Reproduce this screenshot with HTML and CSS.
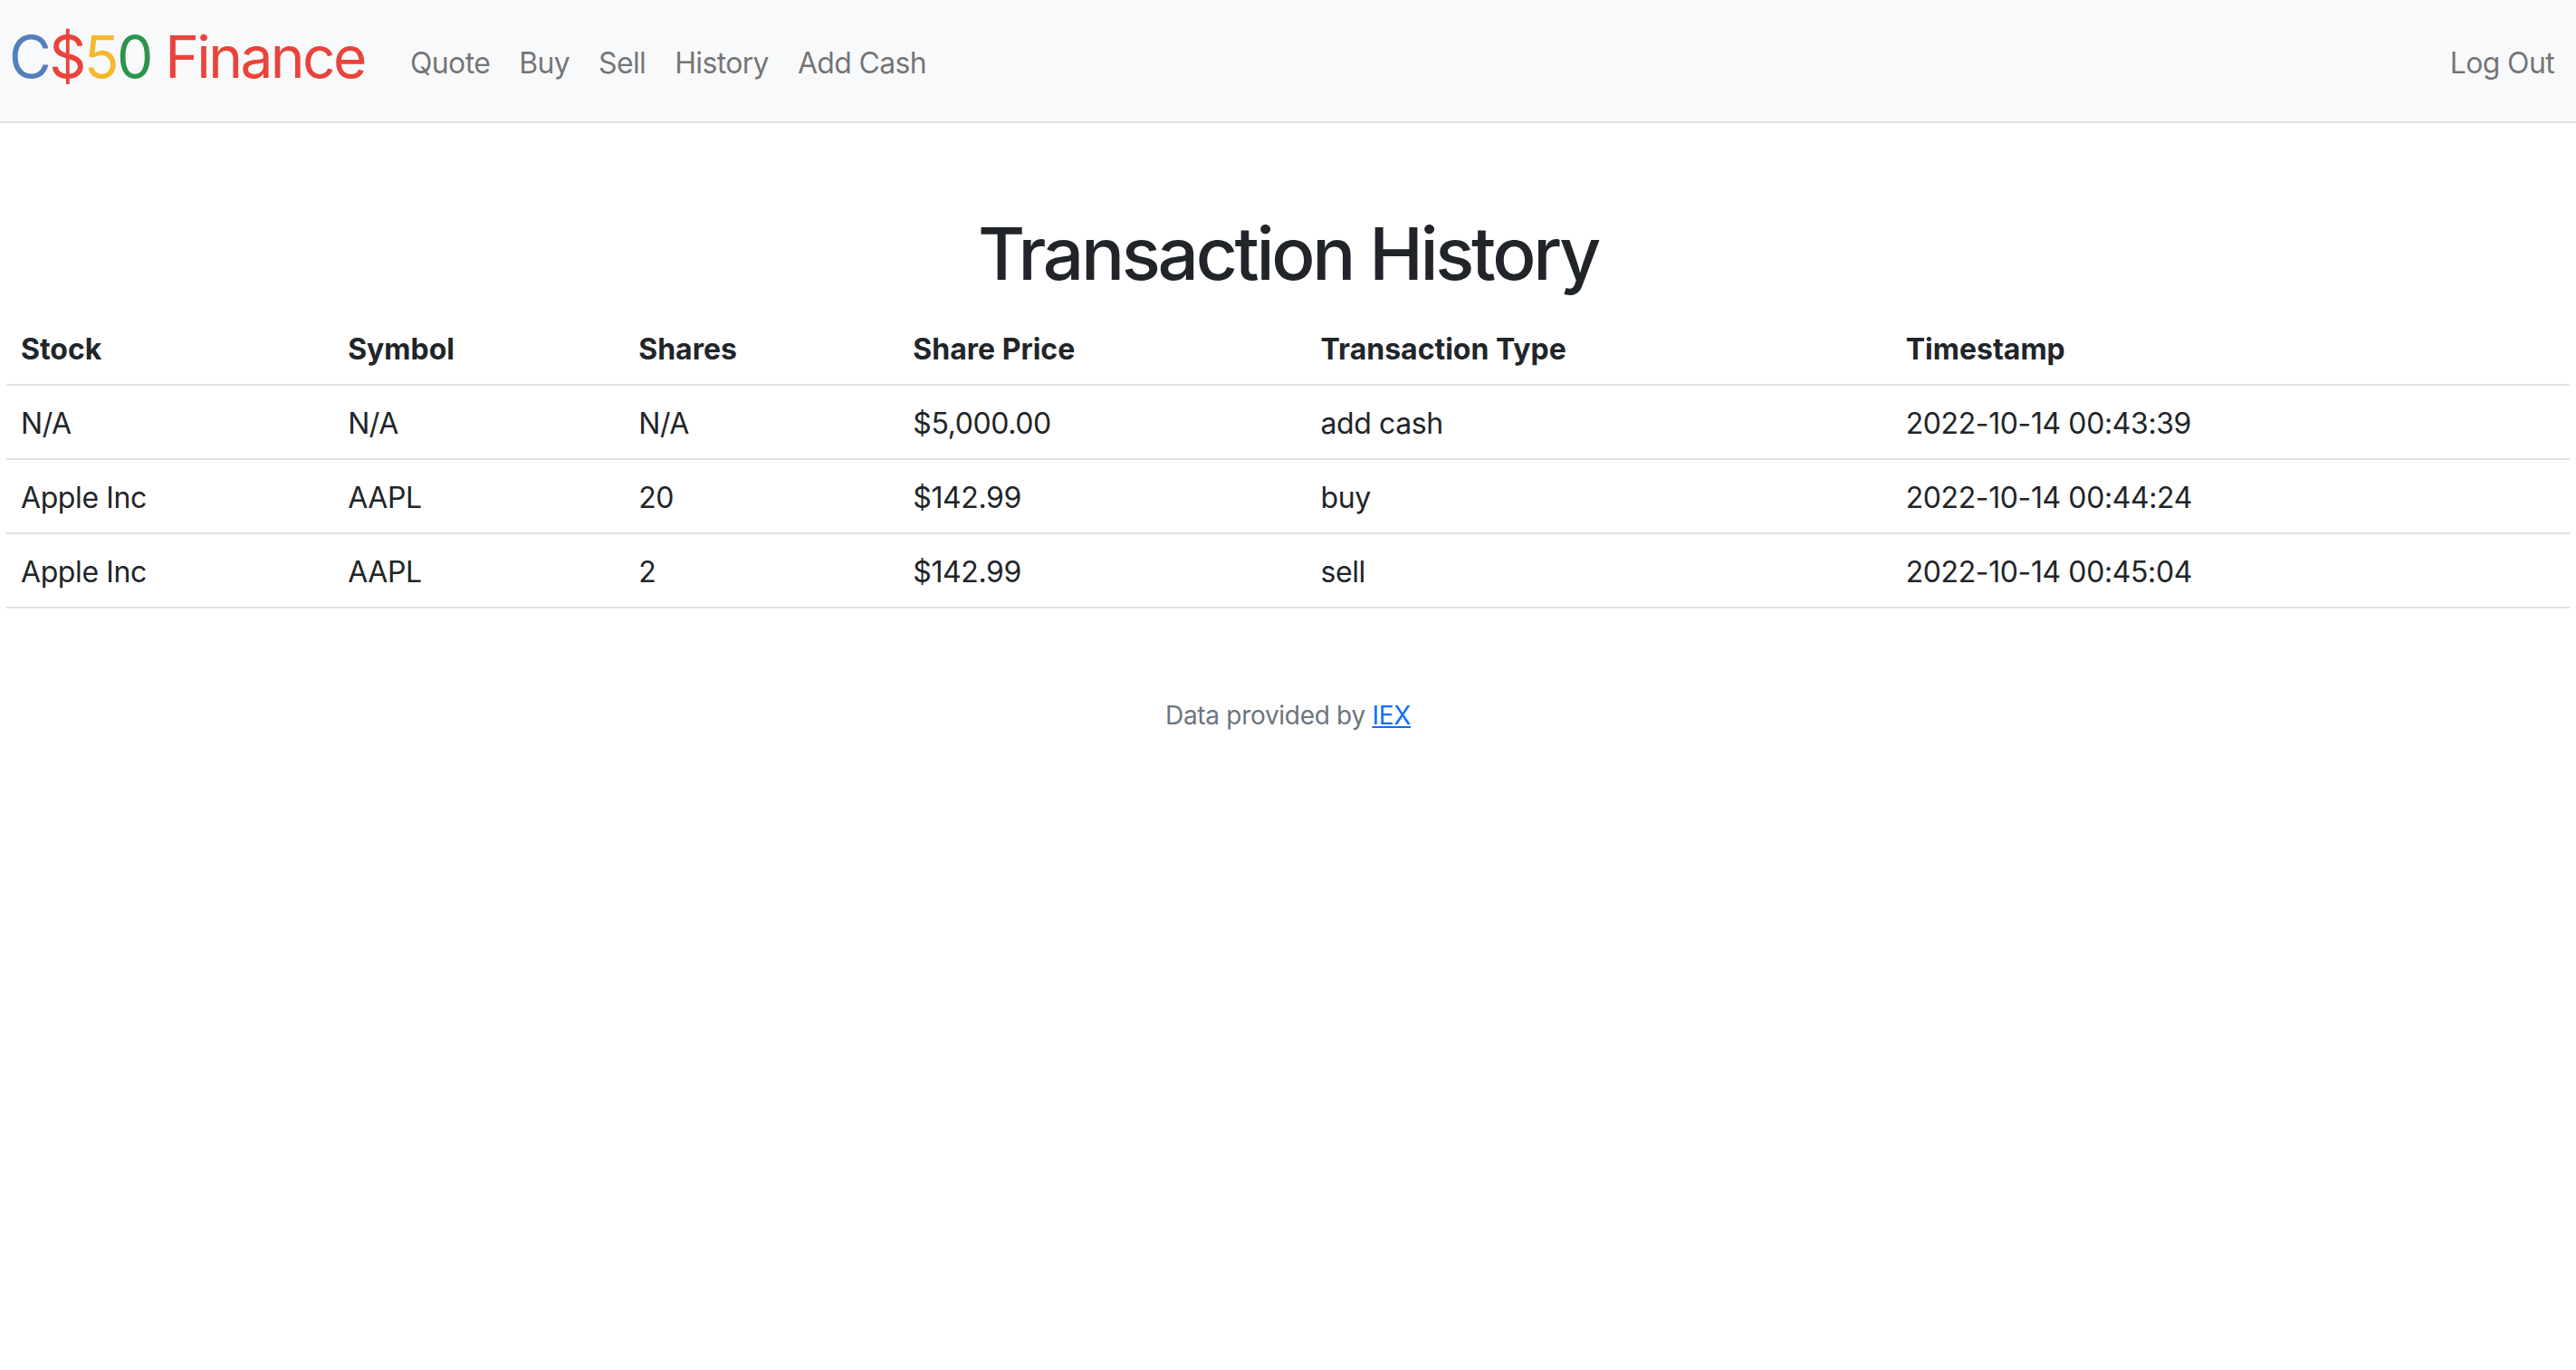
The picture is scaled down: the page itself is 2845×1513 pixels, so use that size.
FILE: index.html
```html
<!DOCTYPE html>
<html lang="en">
<head>
<meta charset="utf-8">
<title>C$50 Finance: History</title>
<link rel="stylesheet" href="styles.css">
</head>
<body>
<nav class="navbar">
  <a class="brand" href="#"><span class="blue">C</span><span class="red">$</span><span class="yellow">5</span><span class="green">0</span> <span class="red">Finance</span></a>
  <ul class="nav-main">
    <li><a class="nav-link" href="#">Quote</a></li>
    <li><a class="nav-link" href="#">Buy</a></li>
    <li><a class="nav-link" href="#">Sell</a></li>
    <li><a class="nav-link" href="#">History</a></li>
    <li><a class="nav-link" href="#">Add Cash</a></li>
  </ul>
  <ul class="nav-right">
    <li><a class="nav-link" href="#">Log Out</a></li>
  </ul>
</nav>
<main class="main">
  <h1 class="title">Transaction History</h1>
  <table class="table">
    <colgroup>
      <col class="c1"><col class="c2"><col class="c3"><col class="c4"><col class="c5"><col class="c6">
    </colgroup>
    <thead>
      <tr><th>Stock</th><th>Symbol</th><th>Shares</th><th>Share Price</th><th>Transaction Type</th><th>Timestamp</th></tr>
    </thead>
    <tbody>
      <tr><td>N/A</td><td>N/A</td><td>N/A</td><td>$5,000.00</td><td>add cash</td><td>2022-10-14 00:43:39</td></tr>
      <tr><td>Apple Inc</td><td>AAPL</td><td>20</td><td>$142.99</td><td>buy</td><td>2022-10-14 00:44:24</td></tr>
      <tr><td>Apple Inc</td><td>AAPL</td><td>2</td><td>$142.99</td><td>sell</td><td>2022-10-14 00:45:04</td></tr>
    </tbody>
  </table>
</main>
<footer class="footer">Data provided by <a class="footer-link" href="#">IEX</a></footer>
</body>
</html>
```
FILE: styles.css
```css
* { box-sizing: border-box; }
html, body { margin: 0; padding: 0; }
body {
  font-family: Inter, "Liberation Sans", sans-serif;
  font-size: 32px;
  line-height: 1.5;
  color: #212529;
  background: #fff;
}
.navbar {
  display: flex;
  align-items: center;
  height: 136px;
  padding: 0 8px 0 10px;
  background: #f8f9fa;
  border-bottom: 2px solid #dee2e6;
}
.brand {
  flex: 0 0 auto;
  width: 411px;
  margin-right: 16px;
  font-size: 64px;
  line-height: 96px;
  padding-bottom: 8px;
  letter-spacing: -2.6px;
  text-decoration: none;
  white-space: nowrap;
}
.blue { color: #537fbe; }
.red { color: #ea433b; }
.yellow { color: #f5b82e; }
.green { color: #2e944b; }
.nav-main, .nav-right {
  display: flex;
  list-style: none;
  margin: 0;
  padding: 0;
}
.nav-right { margin-left: auto; }
.nav-link {
  display: block;
  padding: 5px 16px 0;
  line-height: 48px;
  letter-spacing: -0.65px;
  color: rgba(0, 0, 0, 0.55);
  text-decoration: none;
  white-space: nowrap;
}
.main {
  padding: 96px 7px 0;
  text-align: center;
}
.title {
  margin: 0 0 16px;
  font-size: 80px;
  font-weight: 500;
  line-height: 1.2;
  letter-spacing: -3.3px;
}
.table {
  width: 100%;
  table-layout: fixed;
  border-collapse: collapse;
  text-align: left;
}
.c1 { width: 361px; }
.c2 { width: 321px; }
.c3 { width: 303px; }
.c4 { width: 450px; }
.c5 { width: 646px; }
.c6 { width: 749px; }
.table th, .table td {
  padding: 18px 16px 14px;
  line-height: 48px;
  border-bottom: 2px solid #dee2e6;
  white-space: nowrap;
}
.table th { font-weight: 700; }
.table td { letter-spacing: -0.4px; }
.footer {
  margin-top: 97px;
  text-align: center;
  font-size: 28px;
  line-height: 42px;
  letter-spacing: -0.3px;
  color: #6c757d;
}
.footer-link { color: #0d6efd; }
```
